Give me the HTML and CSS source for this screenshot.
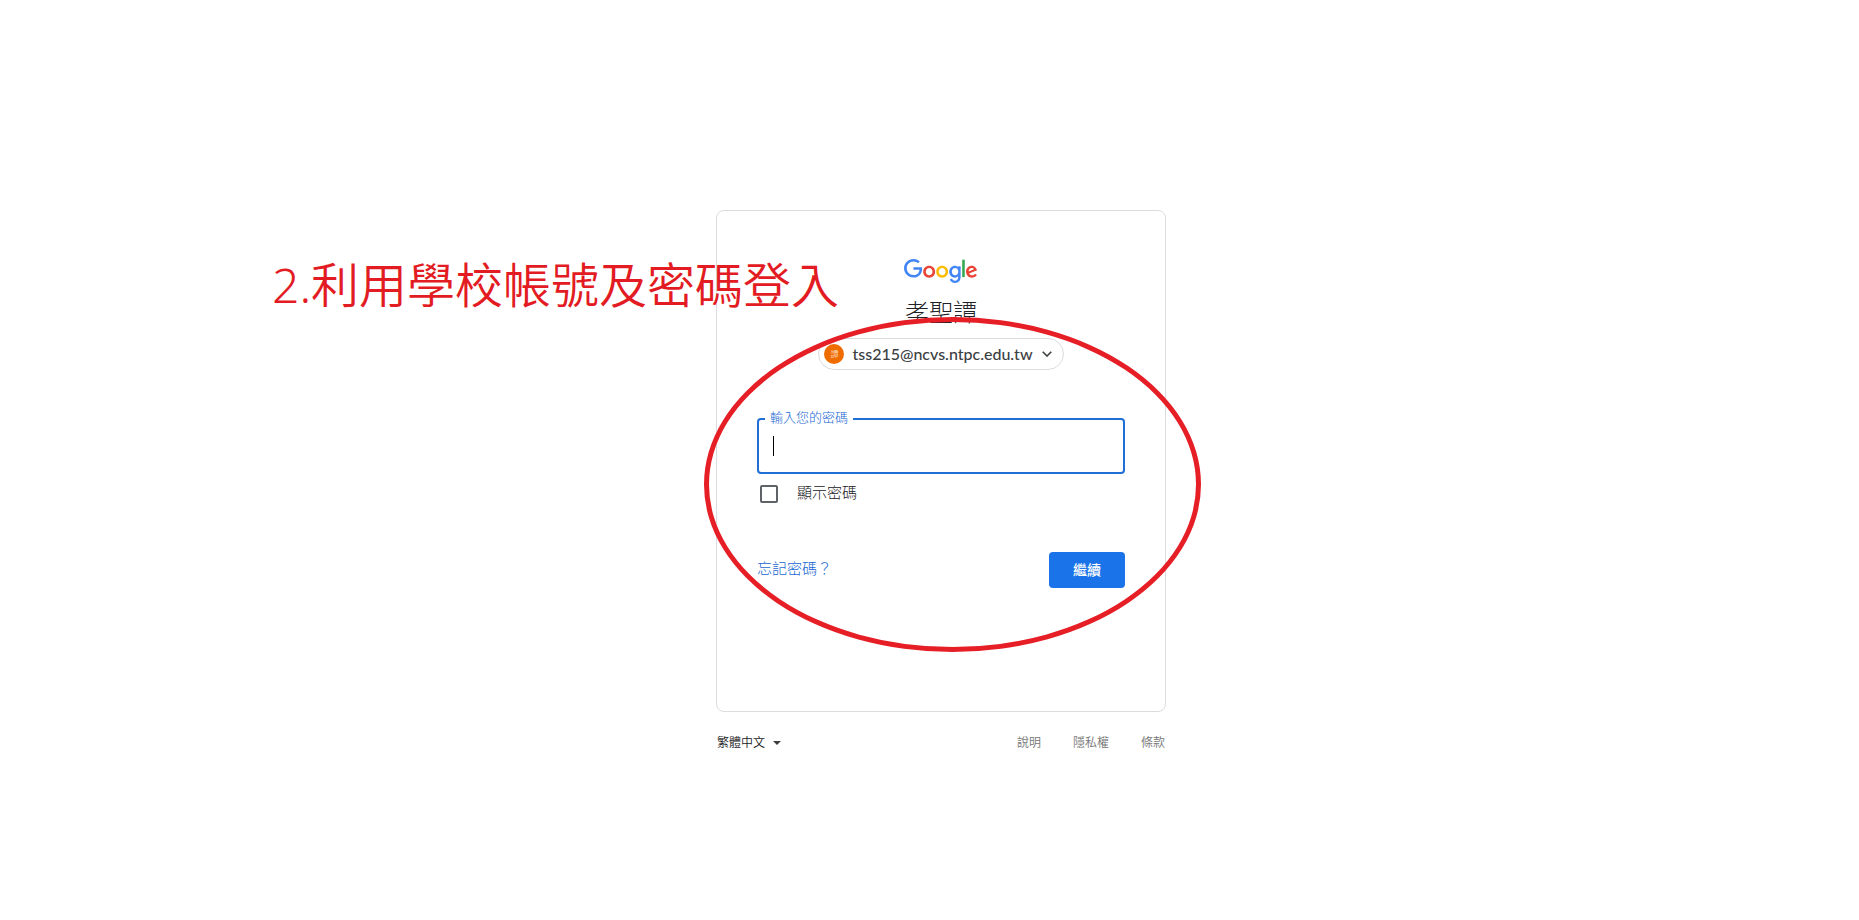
FILE: index.html
```html
<!DOCTYPE html>
<html lang="zh-Hant">

<head>
  <meta charset="UTF-8">
  <meta name="viewport" content="width=device-width, initial-scale=1.0">
  <title>登入 - Google 帳戶</title>
  <link rel="stylesheet" href="styles.css">
</head>

<body>
  <main class="login">
    <section class="card">
      <svg class="logo" viewBox="0 0 75 24" width="75" height="24" role="img" aria-label="Google">
        <path fill="#ea4335" d="M67.954 16.303c-1.33 0-2.278-.608-2.886-1.804l7.967-3.3-.27-.68c-.495-1.33-2.008-3.79-5.102-3.79-3.068 0-5.622 2.41-5.622 5.96 0 3.34 2.53 5.96 5.92 5.96 2.73 0 4.31-1.67 4.97-2.64l-2.03-1.35c-.673.98-1.6 1.64-2.93 1.64zm-.203-7.27c1.04 0 1.92.52 2.21 1.264l-5.32 2.21c-.06-2.3 1.79-3.474 3.12-3.474z"/>
        <path fill="#34a853" d="M58.193.67h2.564v17.44h-2.564z"/>
        <path fill="#4285f4" d="M54.152 8.066h-.088c-.588-.697-1.716-1.33-3.136-1.33-2.98 0-5.71 2.614-5.71 5.98 0 3.338 2.73 5.933 5.71 5.933 1.42 0 2.548-.64 3.136-1.36h.088v.86c0 2.28-1.217 3.5-3.183 3.5-1.61 0-2.6-1.15-3-2.12l-2.28.94c.65 1.58 2.39 3.52 5.28 3.52 3.06 0 5.66-1.807 5.66-6.206V7.21h-2.48v.858zm-3.006 8.237c-1.804 0-3.318-1.513-3.318-3.588 0-2.1 1.514-3.635 3.318-3.635 1.784 0 3.183 1.534 3.183 3.635 0 2.075-1.4 3.588-3.19 3.588z"/>
        <path fill="#fbbc05" d="M38.17 6.735c-3.28 0-5.953 2.506-5.953 5.96 0 3.432 2.673 5.96 5.954 5.96 3.29 0 5.96-2.528 5.96-5.96 0-3.46-2.67-5.96-5.95-5.96zm0 9.568c-1.798 0-3.348-1.487-3.348-3.61 0-2.14 1.55-3.608 3.35-3.608s3.348 1.467 3.348 3.608c0 2.116-1.55 3.61-3.35 3.61z"/>
        <path fill="#ea4335" d="M25.17 6.71c-3.28 0-5.954 2.505-5.954 5.958 0 3.433 2.673 5.96 5.954 5.96 3.282 0 5.955-2.527 5.955-5.96 0-3.453-2.673-5.96-5.955-5.96zm0 9.567c-1.8 0-3.35-1.487-3.35-3.61 0-2.14 1.55-3.608 3.35-3.608s3.35 1.46 3.35 3.6c0 2.12-1.55 3.61-3.35 3.61z"/>
        <path fill="#4285f4" d="M14.11 14.182c.722-.723 1.205-1.78 1.387-3.334H9.423V8.373h8.518c.09.452.16 1.07.16 1.664 0 1.903-.52 4.26-2.19 5.934-1.63 1.7-3.71 2.61-6.48 2.61-5.12 0-9.42-4.17-9.42-9.29C0 4.17 4.31 0 9.43 0c2.83 0 4.843 1.108 6.362 2.56L14 4.347c-1.087-1.02-2.56-1.81-4.577-1.81-3.74 0-6.662 3.01-6.662 6.75s2.93 6.75 6.67 6.75c2.43 0 3.81-.972 4.69-1.856z"/>
      </svg>
      <h1 class="name">孝聖譚</h1>
      <button class="account" type="button">
        <span class="avatar">譚</span>
        <span class="email">tss215@ncvs.ntpc.edu.tw</span>
        <svg class="chevron" viewBox="0 0 10 6" width="10" height="6" aria-hidden="true">
          <path d="M.7.7 5 5 9.3.7" fill="none" stroke="#3c4043" stroke-width="1.6"/>
        </svg>
      </button>

      <form class="form">
        <div class="field">
          <input class="password" id="password" type="password">
          <label class="field_label" for="password">輸入您的密碼</label>
          <span class="caret"></span>
        </div>
        <div class="show">
          <input class="checkbox" id="show" type="checkbox">
          <label class="show_label" for="show">顯示密碼</label>
        </div>
        <div class="actions">
          <a class="forgot" href="#">忘記密碼？</a>
          <button class="next" type="submit">繼續</button>
        </div>
      </form>
    </section>

    <footer class="footer">
      <div class="language">
        <select class="language_select" aria-label="語言">
          <option>繁體中文</option>
        </select>
        <svg class="triangle" viewBox="0 0 8 4" width="8" height="4" aria-hidden="true">
          <path d="M0 0h8L4 4z" fill="#3c4043"/>
        </svg>
      </div>
      <nav class="links">
        <a href="#">說明</a>
        <a href="#">隱私權</a>
        <a href="#">條款</a>
      </nav>
    </footer>

    <!-- 教學標示 -->
    <p class="step">2.利用學校帳號及密碼登入</p>
    <div class="circle"></div>
  </main>
</body>

</html>
```

FILE: styles.css
```css
* {
  margin: 0;
  padding: 0;
  box-sizing: border-box;
}

body {
  min-height: 100vh;
  padding: 210px 0 0 23px;
  background-color: #fff;
  color: #202124;
  font-family: "Noto Sans", "Noto Sans CJK TC", sans-serif;
  font-size: 15px;
  font-weight: 300;
}

a {
  text-decoration: none;
}

input,
select,
button {
  font: inherit;
  color: inherit;
}

.login {
  position: relative;
  max-width: 450px;
  margin: 0 auto;
}

.card {
  display: flex;
  flex-direction: column;
  align-items: center;
  min-height: 502px;
  padding: 48px 40px;
  border: 1px solid #dadce0;
  border-radius: 8px;
}

.name {
  margin-top: 13px;
  font-size: 24px;
  font-weight: 300;
  line-height: 32px;
}

.account {
  display: flex;
  align-items: center;
  height: 32px;
  margin-top: 10px;
  padding: 0 11px 0 5px;
  border: 1px solid #dadce0;
  border-radius: 16px;
  background-color: #fff;
  color: #3c4043;
  cursor: pointer;
}

.avatar {
  width: 20px;
  height: 20px;
  border-radius: 50%;
  background-color: #ef6c00;
  color: #fff;
  font-size: 8px;
  line-height: 20px;
  text-align: center;
}

.email {
  margin: 0 9px 0 8px;
  font-family: Lato, sans-serif;
  font-size: 16px;
  font-weight: 500;
  line-height: 20px;
}

.form {
  width: 100%;
  margin-top: 48px;
}

.field {
  position: relative;
}

.password {
  display: block;
  width: 100%;
  height: 56px;
  padding: 0 14px;
  border: 2px solid #1f6fd6;
  border-radius: 4px;
  outline: none;
  caret-color: transparent;
}

.field_label {
  position: absolute;
  top: -10px;
  left: 8px;
  padding: 0 5px;
  background-color: #fff;
  color: #1967d2;
  font-size: 13px;
  line-height: 18px;
}

.caret {
  position: absolute;
  top: 18px;
  left: 16px;
  width: 1px;
  height: 20px;
  background-color: #000;
}

.show {
  display: flex;
  align-items: center;
  gap: 19px;
  height: 24px;
  margin-top: 8px;
  padding-left: 3px;
}

.show_label,
.forgot {
  padding-bottom: 4px;
  line-height: 20px;
}

.checkbox {
  width: 18px;
  height: 18px;
  border: 2px solid #5f6368;
  border-radius: 2px;
  appearance: none;
}

.checkbox:checked {
  border-color: #1a73e8;
  background-color: #1a73e8;
}

.actions {
  display: flex;
  align-items: center;
  justify-content: space-between;
  margin-top: 46px;
}

.forgot {
  color: #1967d2;
}

.next {
  height: 36px;
  padding: 0 24px 2px;
  border: none;
  border-radius: 4px;
  background-color: #1a73e8;
  color: #fff;
  font-size: 14px;
  font-weight: 500;
  cursor: pointer;
}

.footer {
  display: flex;
  align-items: center;
  justify-content: space-between;
  height: 60px;
  padding-right: 1px;
  font-size: 12px;
  font-weight: 350;
}

.language {
  position: relative;
}

.language_select {
  padding: 0 15px 0 1px;
  border: none;
  background-color: transparent;
  appearance: none;
}

.triangle {
  position: absolute;
  top: 50%;
  right: 0;
  margin-top: -1px;
  pointer-events: none;
}

.links {
  display: flex;
  gap: 32px;
}

.links a {
  color: #757575;
}

.step {
  position: absolute;
  top: 43px;
  left: -444px;
  color: #e31b23;
  font-size: 48px;
  font-weight: 350;
  line-height: 64px;
  white-space: nowrap;
  pointer-events: none;
}

.circle {
  position: absolute;
  top: 107px;
  left: -12px;
  width: 497px;
  height: 335px;
  border: 5px solid #e61e26;
  border-radius: 50%;
  pointer-events: none;
}
```
